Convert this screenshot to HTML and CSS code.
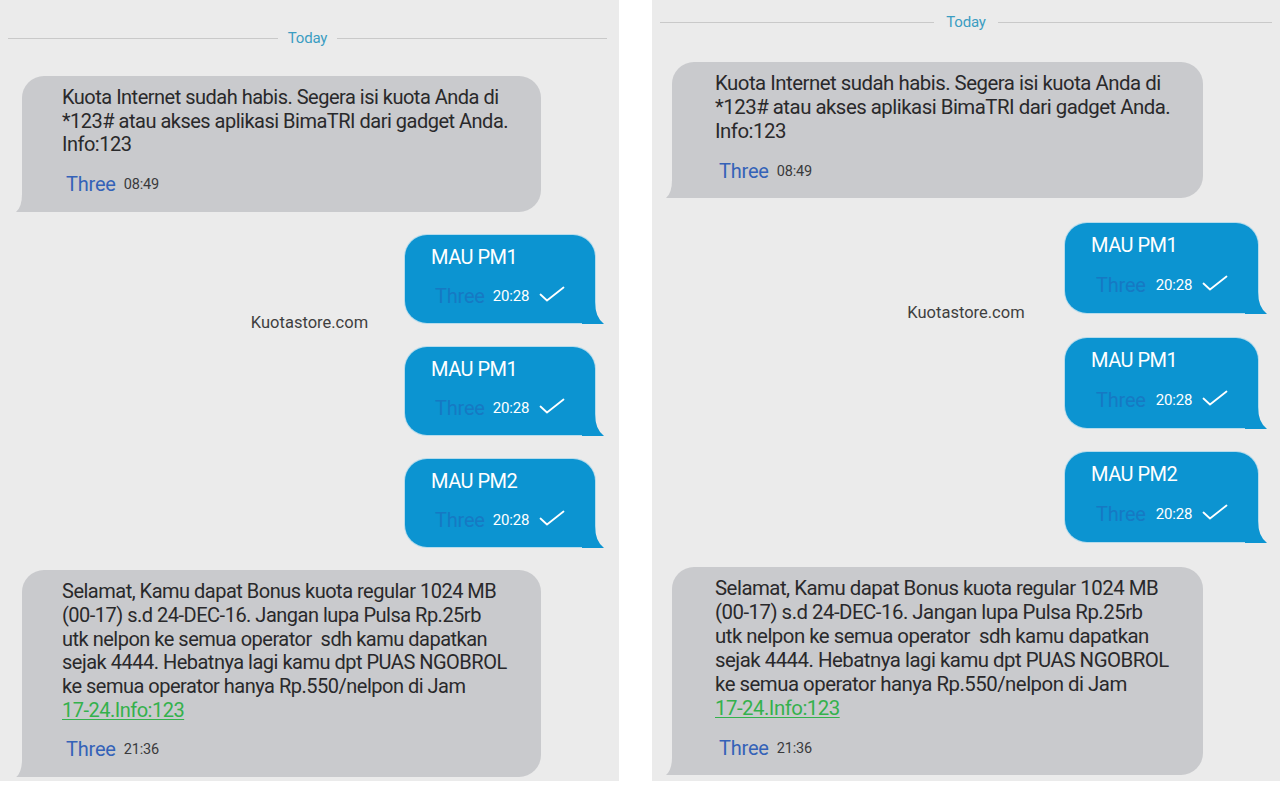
FILE: index.html
```html
<!DOCTYPE html>
<html lang="id">
<head>
<meta charset="utf-8">
<title>SMS Three</title>
<link rel="stylesheet" href="styles.css">
</head>
<body>
<div class="stage">
  <section class="panel panel-left">
    <div class="divider"><span class="rule"></span><span class="day">Today</span><span class="rule"></span></div>

    <div class="bubble in b-first">
      <p class="msg">Kuota Internet sudah habis. Segera isi kuota Anda di<br>*123# atau akses aplikasi BimaTRI dari gadget Anda.<br>Info:123</p>
      <div class="meta"><span class="sender">Three</span><span class="time">08:49</span></div>
    </div>

    <div class="bubble out o-1">
      <p class="msg">MAU PM1</p>
      <div class="meta"><span class="sender">Three</span><span class="time">20:28</span><svg class="check" viewBox="0 0 26 16" width="26" height="16"><polyline points="1.5,8.5 8,14.5 24.5,1.5" fill="none" stroke="#ffffff" stroke-width="1.8" stroke-linecap="round" stroke-linejoin="round"/></svg></div>
    </div>

    <div class="bubble out o-2">
      <p class="msg">MAU PM1</p>
      <div class="meta"><span class="sender">Three</span><span class="time">20:28</span><svg class="check" viewBox="0 0 26 16" width="26" height="16"><polyline points="1.5,8.5 8,14.5 24.5,1.5" fill="none" stroke="#ffffff" stroke-width="1.8" stroke-linecap="round" stroke-linejoin="round"/></svg></div>
    </div>

    <div class="bubble out o-3">
      <p class="msg">MAU PM2</p>
      <div class="meta"><span class="sender">Three</span><span class="time">20:28</span><svg class="check" viewBox="0 0 26 16" width="26" height="16"><polyline points="1.5,8.5 8,14.5 24.5,1.5" fill="none" stroke="#ffffff" stroke-width="1.8" stroke-linecap="round" stroke-linejoin="round"/></svg></div>
    </div>

    <div class="bubble in b-last">
      <p class="msg">Selamat, Kamu dapat Bonus kuota regular 1024 MB<br>(00-17) s.d 24-DEC-16. Jangan lupa Pulsa Rp.25rb<br>utk nelpon ke semua operator &nbsp;sdh kamu dapatkan<br>sejak 4444. Hebatnya lagi kamu dpt PUAS NGOBROL<br>ke semua operator hanya Rp.550/nelpon di Jam<br><span class="link">17-24.Info:123</span></p>
      <div class="meta"><span class="sender">Three</span><span class="time">21:36</span></div>
    </div>

    <div class="watermark">Kuotastore.com</div>
  </section>

  <section class="panel panel-right">
    <div class="divider"><span class="rule"></span><span class="day">Today</span><span class="rule"></span></div>

    <div class="bubble in b-first">
      <p class="msg">Kuota Internet sudah habis. Segera isi kuota Anda di<br>*123# atau akses aplikasi BimaTRI dari gadget Anda.<br>Info:123</p>
      <div class="meta"><span class="sender">Three</span><span class="time">08:49</span></div>
    </div>

    <div class="bubble out o-1">
      <p class="msg">MAU PM1</p>
      <div class="meta"><span class="sender">Three</span><span class="time">20:28</span><svg class="check" viewBox="0 0 26 16" width="26" height="16"><polyline points="1.5,8.5 8,14.5 24.5,1.5" fill="none" stroke="#ffffff" stroke-width="1.8" stroke-linecap="round" stroke-linejoin="round"/></svg></div>
    </div>

    <div class="bubble out o-2">
      <p class="msg">MAU PM1</p>
      <div class="meta"><span class="sender">Three</span><span class="time">20:28</span><svg class="check" viewBox="0 0 26 16" width="26" height="16"><polyline points="1.5,8.5 8,14.5 24.5,1.5" fill="none" stroke="#ffffff" stroke-width="1.8" stroke-linecap="round" stroke-linejoin="round"/></svg></div>
    </div>

    <div class="bubble out o-3">
      <p class="msg">MAU PM2</p>
      <div class="meta"><span class="sender">Three</span><span class="time">20:28</span><svg class="check" viewBox="0 0 26 16" width="26" height="16"><polyline points="1.5,8.5 8,14.5 24.5,1.5" fill="none" stroke="#ffffff" stroke-width="1.8" stroke-linecap="round" stroke-linejoin="round"/></svg></div>
    </div>

    <div class="bubble in b-last">
      <p class="msg">Selamat, Kamu dapat Bonus kuota regular 1024 MB<br>(00-17) s.d 24-DEC-16. Jangan lupa Pulsa Rp.25rb<br>utk nelpon ke semua operator &nbsp;sdh kamu dapatkan<br>sejak 4444. Hebatnya lagi kamu dpt PUAS NGOBROL<br>ke semua operator hanya Rp.550/nelpon di Jam<br><span class="link">17-24.Info:123</span></p>
      <div class="meta"><span class="sender">Three</span><span class="time">21:36</span></div>
    </div>

    <div class="watermark">Kuotastore.com</div>
  </section>
</div>
</body>
</html>
```

FILE: styles.css
```css
* { box-sizing: border-box; }

html, body {
  margin: 0;
  padding: 0;
  background: #ffffff;
}

body {
  width: 1283px;
  height: 785px;
  overflow: hidden;
  font-family: Roboto, "Liberation Sans", Arial, sans-serif;
}

.stage {
  display: flex;
  align-items: flex-start;
  gap: 33px;
}

.panel {
  position: relative;
  background: #ebebeb;
  height: 781px;
  display: flex;
  flex-direction: column;
}

.panel-left { width: 619px; }
.panel-right { width: 628px; }

/* date divider */
.divider {
  display: flex;
  align-items: center;
  height: 20px;
}
.panel-left .divider { margin: 28px 12px 0 8px; gap: 10px; }
.panel-right .divider { margin: 12px 8px 0 8px; gap: 12px; }

.rule {
  flex: 1;
  height: 1px;
  background: #c9c9c9;
}
.day {
  font-size: 15px;
  color: #3b9dc2;
  letter-spacing: -0.2px;
  line-height: 20px;
}

/* bubbles */
.bubble {
  position: relative;
  border-radius: 22px;
}

.msg {
  margin: 0;
  font-size: 20px;
  letter-spacing: -0.5px;
  white-space: nowrap;
}

.meta {
  display: flex;
  align-items: center;
  height: 24px;
}

.sender {
  font-size: 20px;
  letter-spacing: -0.2px;
}
.time {
  font-size: 14.5px;
  letter-spacing: -0.2px;
}

/* incoming */
.bubble.in {
  align-self: flex-start;
  background: #c9cacd;
  color: #29292b;
  border-bottom-left-radius: 0;
}
.bubble.in::before {
  content: "";
  position: absolute;
  left: -6px;
  bottom: 0;
  width: 24px;
  height: 18px;
  background: #c9cacd;
  clip-path: path("M6 0 Q6 13 0 18 L24 18 L24 0 Z");
}
.bubble.in .msg { line-height: 23.7px; }
.bubble.in .meta { padding-left: 4px; gap: 8px; }
.bubble.in .sender { color: #3462b8; }
.bubble.in .time { color: #3a3a3c; }

.link {
  color: #34b14c;
  text-decoration: underline;
  text-underline-offset: 2px;
  text-decoration-thickness: 1px;
}

.panel-left .bubble.in { margin-left: 22px; width: 519px; padding: 10px 20px 16px 40px; }
.panel-left .bubble.in .meta { margin-top: 15px; }
.panel-left .b-first { margin-top: 28px; }
.panel-left .b-last { margin-top: 23px; padding-top: 9px; padding-bottom: 17px; }

.panel-right .bubble.in { margin-left: 20px; width: 531px; padding: 9px 20px 15px 43px; }
.panel-right .bubble.in .msg { line-height: 24px; font-size: 20.4px; }
.panel-right .bubble.in .meta { margin-top: 16px; }
.panel-right .b-first { margin-top: 30px; }
.panel-right .b-last { margin-top: 25px; padding-top: 11px; padding-bottom: 17px; }

/* outgoing */
.bubble.out {
  align-self: flex-end;
  background: #0c94d1;
  color: #ffffff;
  border-bottom-right-radius: 8px;
  box-shadow: 0 0 0 1px rgba(140, 205, 235, 0.55);
}
.bubble.out::after {
  content: "";
  position: absolute;
  right: -9px;
  bottom: -1px;
  width: 22px;
  height: 22px;
  background: #0c94d1;
  clip-path: path("M13 0 Q13 15 22 22 L0 22 L0 0 Z");
}
.bubble.out .msg { line-height: 24px; }
.bubble.out .meta { padding-left: 4px; }
.bubble.out .sender { color: #1679c3; }
.bubble.out .time { color: #ffffff; margin-left: 8px; font-size: 15px; }
.bubble.out .check { margin-left: 10px; margin-top: -5px; }

.panel-left .bubble.out { margin-right: 24px; width: 190px; padding: 10px 10px 15px 26px; }
.panel-left .bubble.out .meta { margin-top: 15px; }
.panel-left .o-1 { margin-top: 23px; }
.panel-left .o-2 { margin-top: 24px; }
.panel-left .o-3 { margin-top: 24px; }

.panel-right .bubble.out { margin-right: 22px; width: 193px; padding: 10px 10px 16px 26px; }
.panel-right .bubble.out .meta { margin-top: 16px; }
.panel-right .bubble.out .meta { padding-left: 5px; }
.panel-right .bubble.out .time { margin-left: 10px; }
.panel-right .o-1 { margin-top: 25px; }
.panel-right .o-2 { margin-top: 25px; }
.panel-right .o-3 { margin-top: 24px; }

/* watermark */
.watermark {
  position: absolute;
  left: 0;
  right: 0;
  text-align: center;
  font-size: 16.5px;
  color: #3f3f3f;
  line-height: 20px;
}
.panel-left .watermark { top: 313px; }
.panel-right .watermark { top: 303px; }
```
